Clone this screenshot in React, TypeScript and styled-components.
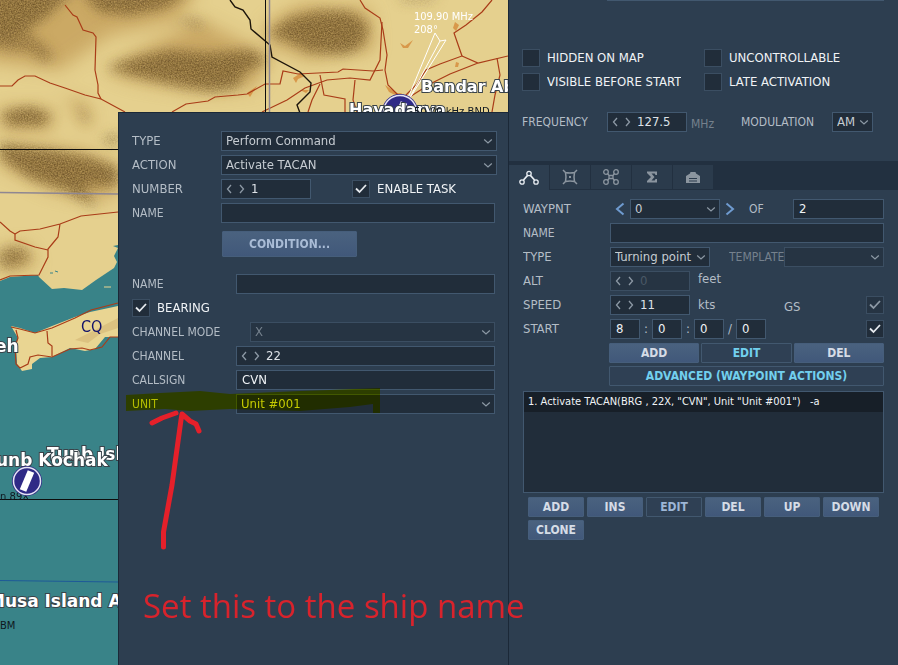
import React, { useId, useState } from 'react';
import styled, { createGlobalStyle, css } from 'styled-components';

const color = {
  panel: '#2d3e50',
  band: '#223040',
  tab: '#2b3b4c',
  field: '#212d3a',
  fieldOff: '#263443',
  line: '#42586f',
  lineOff: '#3b4e62',
  label: '#b4bdc6',
  value: '#c6ccd2',
  bright: '#f0f3f6',
  muted: '#75818d',
  accent: '#72d0ee',
  red: '#d8232c',
};

const GlobalStyle = createGlobalStyle`
  *, *::before, *::after { box-sizing: border-box; }
  body { margin: 0; background: ${color.panel}; }
  body, button, input, select {
    font-family: 'DejaVu Sans Condensed', 'DejaVu Sans', sans-serif;
    font-size: 13px;
    line-height: 16px;
  }
`;

/* ---------- shell ---------- */

const Page = styled.div`
  position: relative;
  display: grid;
  grid-template-columns: minmax(0, 1fr) 390px;
  min-height: 100vh;
  overflow: hidden;
  color: ${color.label};
`;

const Workspace = styled.main`
  position: relative;
  display: flex;
  padding: 112px 0 0 118px;
`;

const MapCanvas = styled.svg`
  position: absolute;
  inset: 0;
  width: 100%;
  height: 100%;
`;

const Dialog = styled.section`
  position: relative;
  flex: 1;
  min-width: 0;
  display: flex;
  flex-direction: column;
  gap: 4px;
  padding: 18px 13px 18px 13px;
  border: solid #1b2837;
  border-width: 1px 0 0 1px;
  background: ${color.panel};
`;

const Sidebar = styled.aside`
  min-width: 0;
  border-left: 1px solid #1b2837;
  background: ${color.panel};
`;

/* ---------- form parts ---------- */

const Row = styled.div<{ $label?: number; $wide?: boolean }>`
  display: grid;
  grid-template-columns: ${p => p.$label ?? 89}px minmax(0, 1fr);
  align-items: center;
  height: 20px;
  margin-right: ${p => (p.$wide ? -2 : 0)}px;
`;

const Label = styled.label<{ $muted?: boolean; $bright?: boolean; $small?: boolean }>`
  white-space: nowrap;
  overflow: hidden;
  font-size: ${p => (p.$small ? 12 : 13)}px;
  color: ${p => (p.$muted ? color.muted : p.$bright ? color.bright : color.label)};
`;

const Inline = styled.div<{ $gap?: number }>`
  display: flex;
  align-items: center;
  min-width: 0;
  min-height: 20px;
  gap: ${p => p.$gap ?? 0}px;
`;

const Push = styled.div`
  flex: 1;
`;

const box = css<{ $off?: boolean }>`
  height: 20px;
  border: 1px solid ${p => (p.$off ? color.lineOff : color.line)};
  border-radius: 0;
  background: ${p => (p.$off ? color.fieldOff : color.field)};
  color: ${p => (p.$off ? color.muted : color.value)};
  outline: none;
  opacity: 1;
`;

const TextInput = styled.input<{ $off?: boolean; $w?: number }>`
  ${box}
  width: ${p => (p.$w ? `${p.$w}px` : '100%')};
  padding: 0 5px 2px;
  color: ${color.bright};
`;

const SelectBox = styled.div<{ $w?: number }>`
  display: grid;
  align-items: center;
  width: ${p => (p.$w ? `${p.$w}px` : '100%')};
  > * { grid-area: 1 / 1; }
  > svg { justify-self: end; margin-right: 4px; pointer-events: none; }
`;

const SelectControl = styled.select<{ $off?: boolean }>`
  ${box}
  appearance: none;
  width: 100%;
  padding: 0 16px 0 4px;
`;

const SpinBox = styled.div<{ $off?: boolean; $w?: number }>`
  ${box}
  display: flex;
  align-items: center;
  width: ${p => (p.$w ? `${p.$w}px` : '100%')};
  padding-left: 4px;
`;

const SpinButton = styled.button`
  display: flex;
  width: 12px;
  padding: 0;
  border: 0;
  background: none;
  color: #8d99a5;
`;

const SpinInput = styled.input<{ $off?: boolean }>`
  flex: 1;
  min-width: 0;
  height: 18px;
  padding: 0 0 2px 1px;
  border: 0;
  outline: none;
  background: none;
  color: ${p => (p.$off ? '#4a5866' : '#dde2e7')};
`;

const CheckBox = styled.span`
  display: inline-grid;
  place-items: center;
  > * { grid-area: 1 / 1; }
  > svg { visibility: hidden; pointer-events: none; }
  > input:checked + svg { visibility: visible; }
`;

const CheckInput = styled.input<{ $off?: boolean }>`
  ${box}
  appearance: none;
  width: 18px;
  height: 18px;
  margin: 0;
  border-color: ${color.lineOff};
`;

const Button = styled.button<{ $active?: boolean; $tone?: string }>`
  height: 20px;
  padding: 0;
  border: 1px solid ${p => (p.$active ? color.line : '#465e7b')};
  border-radius: 1px;
  background: ${p => (p.$active ? '#2f4054' : 'linear-gradient(#4a627f, #41587a)')};
  color: ${p => p.$tone ?? '#d5dce6'};
  font-size: 12px;
  font-weight: bold;
  white-space: nowrap;
`;

const ConditionButton = styled(Button)`
  width: 135px;
  height: 26px;
  margin: 4px 0 13px 90px;
`;

const StepButton = styled.button`
  display: flex;
  justify-content: center;
  width: 20px;
  padding: 0;
  border: 0;
  background: none;
  color: #6f9bd0;
`;

const Chevron = ({ dir, size = 'small' }: { dir: 'left' | 'right' | 'down'; size?: 'small' | 'large' }) => {
  const big = size === 'large';
  if (dir === 'down')
    return (
      <svg width="10" height="8" viewBox="0 0 10 8" fill="none" stroke="#8d99a5" strokeWidth="1.2" aria-hidden>
        <path d="M1.2 2.5 5 6l3.8-3.500" />
      </svg>
    );
  const d = big
    ? dir === 'left' ? 'M8.5 1.500 2 7l6.500 5.500' : 'M1.500 1.500 8 7l-6.500 5.500'
    : dir === 'left' ? 'M5 1 1.5 5 5 9' : 'M2 1l3.5 4L2 9';
  return (
    <svg width={big ? 10 : 7} height={big ? 14 : 10} viewBox={big ? '0 0 10 14' : '0 0 7 10'}
      fill="none" stroke="currentColor" strokeWidth={big ? 2 : 1.3} aria-hidden>
      <path d={d} />
    </svg>
  );
};

type SelectProps = { id?: string; name?: string; value: string; width?: number; off?: boolean };
const Select = ({ id, name, value, width, off }: SelectProps) => (
  <SelectBox $w={width}>
    <SelectControl id={id} aria-label={name} defaultValue={value} $off={off} disabled={off}>
      <option>{value}</option>
    </SelectControl>
    <Chevron dir="down" />
  </SelectBox>
);

type SpinProps = { id?: string; value: string; width?: number; off?: boolean };
const Spinner = ({ id, value, width, off }: SpinProps) => {
  const [current, setCurrent] = useState(value);
  const step = (by: number) => setCurrent(String(Number(current) + by));
  return (
    <SpinBox $w={width} $off={off}>
      <SpinButton type="button" aria-label="Decrease" disabled={off} onClick={() => step(-1)}>
        <Chevron dir="left" />
      </SpinButton>
      <SpinButton type="button" aria-label="Increase" disabled={off} onClick={() => step(1)}>
        <Chevron dir="right" />
      </SpinButton>
      <SpinInput id={id} value={current} disabled={off} $off={off} onChange={e => setCurrent(e.target.value)} />
    </SpinBox>
  );
};

type CheckProps = { id?: string; name?: string; checked?: boolean; off?: boolean };
const Check = ({ id, name, checked, off }: CheckProps) => (
  <CheckBox>
    <CheckInput type="checkbox" id={id} aria-label={name} defaultChecked={checked} disabled={off} $off={off} />
    <svg width="12" height="10" viewBox="0 0 12 10" fill="none" stroke={off ? '#8d99a5' : '#e6eaee'} strokeWidth="1.800" aria-hidden>
      <path d="M1 4.500 4.500 8l6.500-7" />
    </svg>
  </CheckBox>
);

const LabeledCheck = ({ text, checked }: { text: string; checked?: boolean }) => {
  const id = useId();
  return (
    <Inline $gap={7}>
      <Check id={id} checked={checked} />
      <Label htmlFor={id} $bright>{text}</Label>
    </Inline>
  );
};

/* ---------- map ---------- */

const MapName = styled.text<{ $small?: boolean }>`
  font: bold ${p => (p.$small ? 16 : 17)}px 'DejaVu Sans', sans-serif;
  fill: #fff;
  stroke: #39434a;
  stroke-width: 2px;
  paint-order: stroke;
`;

const MapNote = styled.text`
  font: 10px 'DejaVu Sans', sans-serif;
  fill: #101820;
`;

const BeaconNote = styled.text`
  font: 11px 'DejaVu Sans Condensed', 'DejaVu Sans', sans-serif;
  fill: #fff;
`;

const Beacon = ({ x, y, r }: { x: number; y: number; r: number }) => (
  <g transform={`translate(${x} ${y})`}>
    <circle r={r} fill="#2f2a86" />
    <circle r={r - 1.5} fill="none" stroke="#e6e4f4" strokeWidth="1.500" />
    <path d="M-4 9.500 4-9.500" stroke="#fff" strokeWidth="7" />
  </g>
);

const roads = [
  'M65 5l8 10 4 2 6 13 10 3 3 4-1 33 3 15v8l3 6',
  'M0 86h12l6-6 7-4h10l15 7 15 5 20 7 16 4 24 13',
  'M172 112l14-8 22-3 7-4 23-2 9-1 18-10h15l3-13 15 3 40-2 5-3 30 2 10-1',
  'M360 0l5 8 15 10 3 12 4 25-2 15 3 15 10 10',
  'M382 22l-2 38-10 20-20-2-23 2-22 8-18 12-25 12',
  'M492 0l-10 12-16 13-12 8 8 23-22 8-14 6-10 15-12 12',
  'M462 56l16 7 30-7M478 63l-28 11-20 10-22 14',
  'M497 58l3 17-5 20-3 17',
  'M320 75l4 20 21 4v13M308 112l4-12 8-16M355 80l-2 20 4 12',
  'M0 222l10 9 5 3M15 234l5-3 20-2 20-5 21-8 37-4M60 224l-2 13-5 6-5 6v8l-5 10-4 8-29 1-10 4',
  'M15 234v6l20 7 13 3',
  'M11 327l9 2 15 4 17-5 23-10 16-8 27-7M47 331l1 12 4 3v10M16 330l2 8-3 8 1 18 4 4 8-4 2-7 8-2 14 2 18-8 12-1 8 2 12-3 8-10h17',
];

const MapView = () => (
  <MapCanvas viewBox="0 0 509 665" preserveAspectRatio="xMinYMin slice" role="img" aria-label="Mission map">
    <defs>
      <filter id="soft" x="-20%" y="-30%" width="140%" height="160%">
        <feGaussianBlur stdDeviation="9" />
      </filter>
      <filter id="relief" x="-20%" y="-30%" width="140%" height="160%">
        <feGaussianBlur stdDeviation="6" result="b" />
        <feTurbulence type="fractalNoise" baseFrequency="0.7" numOctaves="2" seed="4" />
        <feColorMatrix values="0 0 0 0 0  0 0 0 0 0  0 0 0 0 0  0 1.1 0 0 0.1" />
        <feComposite in="b" operator="in" />
      </filter>
      <clipPath id="land">
        <path d="M0 0H509V112H118V245l-5 1 5 2-4 8 3 6-3 6-18 12-14 10-18-2-12 1-13-12L38 275 10 277 0 281Z" />
      </clipPath>
    </defs>
    <rect width="509" height="665" fill="#398388" />
    <g clipPath="url(#land)">
      <rect width="509" height="300" fill="#e5d08e" />
      <g fill="#bd9450" opacity="0.650" filter="url(#soft)">
        <path d="M-20-20H200L180 20 110 35 60 70-20 60Z" />
        <path d="M105 70 150 45 200 20 270 55 255 88 200 92 130 80Z" />
        <path d="M265 25 300 5 370 8 375 50 310 60 270 45Z" />
        <path d="M0 108h50l5 22H0ZM0 145l80 5 38 15v30L95 200 50 190 0 165Z" />
        <path d="M0 250l25-5 12 20-37 8ZM60 95l25 8 8 22-10 2-10-20Z" />
      </g>
      <g fill="#71562b" filter="url(#relief)">
        <path d="M-10-10H75L45 18 20 35-10 48Z" />
        <path d="M80-8H190L165 8 130 15 100 12Z" />
        <path d="M0 38 28 32 45 45 55 58 42 62 30 52 0 50Z" opacity="0.700" />
        <path d="M106 68 135 58 170 50 210 53 250 50 268 60 245 72 236 88 212 91 180 86 145 78Z" />
        <path d="M268 34 290 18 320 11 350 12 369 26 362 46 345 54 310 52 290 42Z" />
        <path d="M175 20l20-2 12 8-10 2ZM395-4h45l-10 6h-25Z" opacity="0.600" />
        <path d="M2 113l28-6 22 9-10 9H8Z" />
        <path d="M0 144l50 6 40 8 28 10v18H95l-12-2 14 24-32-18-35-12L0 157Z" />
        <path d="M0 250l20-3 12 10-12 8-20 3ZM78 100l12 22-7-2ZM100 140l18-8v14Z" opacity="0.800" />
      </g>
      <g fill="#d48a3a" opacity="0.800">
        <path d="M293 78l8-5 4 3-7 3-2 4ZM300 90h9l-3 3ZM400 43l5 3 8-6-5 8h-5ZM385 85l12 8h5l-3 4-10-5ZM455 22l4 3-3 6-3-3ZM456 62l3 1-1 4h-3ZM247 93l10-7-7 11Z" />
      </g>
    </g>
    <path d="M11 326l9 2 15 5 17-7 23-9 15-5 28-6v31h-13l-10 12-10 2-15-3-18 9-12 1-8 6v5l-10 2-5-7-1-19 2-7Z" fill="#e9d592" />
    <path d="M75 340l20-10 23-12v10l-18 6-12 9Z" fill="#c9a566" opacity="0.400" />
    <path d="M104 287h7" stroke="#e9d592" />
    <path d="M50 273h3M55 271l3 1" stroke="#398388" />
    <g fill="none" stroke="#a93c18" strokeWidth="1.200">
      {roads.map(d => <path key={d} d={d} />)}
    </g>
    <path d="M230 0l5 7 8 3 7 10 1 9 19 16 2 12 28 15 11 11-1 9-13 13 3 8" fill="none" stroke="#1c140a" strokeWidth="1.400" />
    <path d="M265.500 0V112M0 149.500H118M0 499.500H118" stroke="#0d0d0d" />
    <path d="M269.500 0V112M0 192.500 118 194" stroke="#8f8792" strokeWidth="1.500" />
    <path d="M0 580.500 118 582" stroke="#1e5a98" />
    <g fill="none" stroke="#fff">
      <path d="M408 98 435 33l5 8 6-1-36 58M410 97l30-56" />
    </g>
    <BeaconNote x="414" y="20">109.90 MHz</BeaconNote>
    <BeaconNote x="414" y="33">208°</BeaconNote>
    <Beacon x={400} y={112} r={18} />
    <MapName x="349" y="115" $small>Havadarya</MapName>
    <MapNote x="414" y="115">50.00 kHz BND</MapNote>
    <MapName x="421" y="92" $small>Bandar Abbas</MapName>
    <MapName x="-5" y="352">eh</MapName>
    <text x="81" y="332" fill="#12126a" fontSize="16">CQ</text>
    <MapName x="47" y="460">Tunb Island</MapName>
    <MapName x="-4" y="466">unb Kochak</MapName>
    <MapNote x="-4" y="488">t</MapNote>
    <MapNote x="0" y="500">n 89X</MapNote>
    <Beacon x={27} y={481} r={15} />
    <MapName x="-12" y="607">Musa Island Airport</MapName>
    <MapNote x="0" y="629">BM</MapNote>
  </MapCanvas>
);

/* ---------- command dialog ---------- */

const CommandDialog = () => (
  <Dialog aria-label="Waypoint action">
    <Row $wide>
      <Label htmlFor="cmd-type">TYPE</Label>
      <Select id="cmd-type" value="Perform Command" />
    </Row>
    <Row $wide>
      <Label htmlFor="cmd-action">ACTION</Label>
      <Select id="cmd-action" value="Activate TACAN" />
    </Row>
    <Row>
      <Label htmlFor="cmd-number">NUMBER</Label>
      <Inline $gap={41}>
        <Spinner id="cmd-number" value="1" width={90} />
        <LabeledCheck text="ENABLE TASK" checked />
      </Inline>
    </Row>
    <Row>
      <Label htmlFor="cmd-name" $small>NAME</Label>
      <TextInput id="cmd-name" />
    </Row>
    <ConditionButton type="button" $tone="#a9bcd6">CONDITION...</ConditionButton>
    <Row $label={104}>
      <Label htmlFor="tacan-name" $small>NAME</Label>
      <TextInput id="tacan-name" />
    </Row>
    <LabeledCheck text="BEARING" checked />
    <Row $label={118}>
      <Label htmlFor="tacan-mode" $small>CHANNEL MODE</Label>
      <Select id="tacan-mode" value="X" off />
    </Row>
    <Row $label={104}>
      <Label htmlFor="tacan-channel" $small>CHANNEL</Label>
      <Spinner id="tacan-channel" value="22" />
    </Row>
    <Row $label={104}>
      <Label htmlFor="tacan-callsign" $small>CALLSIGN</Label>
      <TextInput id="tacan-callsign" defaultValue="CVN" />
    </Row>
    <Row $label={104}>
      <Label htmlFor="tacan-unit" $small>UNIT</Label>
      <Select id="tacan-unit" value="Unit #001" />
    </Row>
  </Dialog>
);

/* ---------- sidebar ---------- */

const GroupSection = styled.section`
  padding: 0 14px 29px 13px;
`;

const SectionRule = styled.div`
  height: 1px;
  margin-left: 85px;
  background: ${color.line};
`;

const Flags = styled.div`
  display: grid;
  grid-template-columns: 182px minmax(0, 1fr);
  row-gap: 4px;
  padding: 47px 0 20px;
`;

const Units = styled.span<{ $muted?: boolean; $shift?: 'up' | 'down' }>`
  color: ${p => (p.$muted ? color.muted : color.label)};
  font-size: ${p => (p.$muted ? 12 : 13)}px;
  padding-top: ${p => (p.$shift === 'down' ? 4 : 0)}px;
  padding-bottom: ${p => (p.$shift === 'up' ? 4 : 0)}px;
`;

const TabBar = styled.div`
  display: flex;
  gap: 1px;
  height: 29px;
  padding-top: 4px;
  background: ${color.band};
`;

const Tab = styled.button<{ $active?: boolean }>`
  display: grid;
  place-items: center;
  width: 40px;
  height: ${p => (p.$active ? 25 : 24)}px;
  padding: 0;
  border: 0;
  background: ${p => (p.$active ? color.panel : color.tab)};
  color: ${p => (p.$active ? '#e8edf2' : '#8b959f')};
`;

const Waypoint = styled.section`
  display: flex;
  flex-direction: column;
  gap: 4px;
  padding: 9px 14px 0;
`;

const FieldSplit = styled.div<{ $cols: string }>`
  display: grid;
  grid-template-columns: ${p => p.$cols};
  align-items: center;
`;

const Separator = styled.span`
  width: 12px;
  text-align: center;
`;

const WaypointButtons = styled.div`
  display: grid;
  grid-template-columns: repeat(3, 1fr);
  gap: 3px 2px;
  margin-left: 86px;
`;

const WideButton = styled(Button)`
  grid-column: 1 / -1;
`;

const ActionList = styled.ul`
  height: 102px;
  margin: 1px 0 0;
  padding: 0;
  border: 1px solid ${color.line};
  background: ${color.field};
  list-style: none;
`;

const ActionItem = styled.li`
  height: 20px;
  padding: 0 4px;
  background: #171f28;
  color: ${color.bright};
  font-size: 11px;
  line-height: 20px;
  white-space: pre;
`;

const ActionButtons = styled.div`
  display: grid;
  grid-template-columns: repeat(6, 1fr);
  gap: 3px;
  padding: 0 5px;
`;

const tabs = [
  {
    name: 'Route',
    icon: (
      <g fill="none" stroke="currentColor" strokeWidth="1.300">
        <circle cx="3" cy="13" r="2.200" /><circle cx="10" cy="4.500" r="2.200" /><circle cx="17" cy="13" r="2.200" />
        <path d="M4.500 11 8.500 6.500M11.500 6.500l4 4.500" strokeWidth="1.800" />
      </g>
    ),
  },
  {
    name: 'Triggered actions',
    icon: (
      <g fill="none" stroke="currentColor" strokeWidth="1.500">
        <path d="M5.500 4.500q4.500 1 9 0-1 4.500 0 9-4.500-1-9 0 1-4.500 0-9ZM3 2l3 3M17 2l-3 3M3 16l3-3M17 16l-3-3" />
        <path d="M9 9h2" strokeWidth="2" />
      </g>
    ),
  },
  {
    name: 'Payload',
    icon: (
      <g fill="none" stroke="currentColor" strokeWidth="1.300">
        <circle cx="5" cy="4" r="2.300" /><circle cx="15" cy="4" r="2.300" />
        <circle cx="5" cy="14" r="2.300" /><circle cx="15" cy="14" r="2.300" />
        <path d="M6.500 5.500 8 7.500v3l-1.500 2M13.500 5.500 12 7.500v3l1.500 2M8 7.500h4M8 10.500h4" />
      </g>
    ),
  },
  {
    name: 'Summary',
    icon: <path d="M5 3.500h10v3.500h-1.500l-.8-1.500H9.500L12.500 9l-3 3.500h3.200l.8-1.500H15v3.500H5V13l4-4-4-4Z" fill="currentColor" />,
  },
  {
    name: 'Warehouse',
    icon: (
      <>
        <path d="M3 8l4-2.500.5-1.500h5l.5 1.500L17 8v7H3Z" fill="currentColor" />
        <path d="M6 10.500h8M6 13h8" stroke="#2b3b4c" strokeWidth="1.100" />
      </>
    ),
  },
];

const actionButtons = ['ADD', 'INS', 'EDIT', 'DEL', 'UP', 'DOWN', 'CLONE'];

const GroupPanel = () => (
  <Sidebar>
    <GroupSection>
      <SectionRule />
      <Flags>
        <LabeledCheck text="HIDDEN ON MAP" />
        <LabeledCheck text="UNCONTROLLABLE" />
        <LabeledCheck text="VISIBLE BEFORE START" />
        <LabeledCheck text="LATE ACTIVATION" />
      </Flags>
      <Row $label={85}>
        <Label htmlFor="frequency" $small>FREQUENCY</Label>
        <FieldSplit $cols="80px 54px minmax(0, 1fr) 41px 11px">
          <Spinner id="frequency" value="127.5" />
          <Inline $gap={4}><span /><Units $muted $shift="down">MHz</Units></Inline>
          <Label htmlFor="modulation" $small>MODULATION</Label>
          <Select id="modulation" value="AM" />
        </FieldSplit>
      </Row>
    </GroupSection>
    <TabBar role="tablist">
      {tabs.map((t, i) => (
        <Tab key={t.name} type="button" role="tab" aria-label={t.name} aria-selected={i === 0} $active={i === 0}>
          <svg width="20" height="18" viewBox="0 0 20 18" aria-hidden>{t.icon}</svg>
        </Tab>
      ))}
    </TabBar>
    <Waypoint>
      <Row $label={87}>
        <Label htmlFor="wp-index">WAYPNT</Label>
        <FieldSplit $cols="20px 90px 20px minmax(0, 1fr) 91px">
          <StepButton type="button" aria-label="Previous waypoint"><Chevron dir="left" size="large" /></StepButton>
          <Select id="wp-index" value="0" />
          <StepButton type="button" aria-label="Next waypoint"><Chevron dir="right" size="large" /></StepButton>
          <Inline $gap={9}><span /><Label htmlFor="wp-count" $small>OF</Label></Inline>
          <TextInput id="wp-count" defaultValue="2" />
        </FieldSplit>
      </Row>
      <Row $label={87}>
        <Label htmlFor="wp-name" $small>NAME</Label>
        <TextInput id="wp-name" />
      </Row>
      <Row $label={87}>
        <Label htmlFor="wp-type">TYPE</Label>
        <FieldSplit $cols="119px 55px minmax(0, 1fr)">
          <Select id="wp-type" value="Turning point" width={100} />
          <Label htmlFor="wp-template" $muted $small>TEMPLATE</Label>
          <Select id="wp-template" value="" off />
        </FieldSplit>
      </Row>
      <Row $label={87}>
        <Label htmlFor="wp-alt">ALT</Label>
        <Inline $gap={8}>
          <Spinner id="wp-alt" value="0" width={80} off />
          <Units $shift="up">feet</Units>
        </Inline>
      </Row>
      <Row $label={87}>
        <Label htmlFor="wp-speed">SPEED</Label>
        <FieldSplit $cols="80px 94px minmax(0, 1fr) 18px">
          <Spinner id="wp-speed" value="11" />
          <Inline $gap={8}><span /><Units>kts</Units></Inline>
          <Units $shift="down">GS</Units>
          <Check name="Lock ground speed" checked off />
        </FieldSplit>
      </Row>
      <Row $label={87}>
        <Label htmlFor="wp-hours">START</Label>
        <Inline>
          <TextInput id="wp-hours" defaultValue="8" $w={30} />
          <Separator>:</Separator>
          <TextInput aria-label="Minutes" defaultValue="0" $w={30} />
          <Separator>:</Separator>
          <TextInput aria-label="Seconds" defaultValue="0" $w={30} />
          <Separator>/</Separator>
          <TextInput aria-label="Day" defaultValue="0" $w={30} />
          <Push />
          <Check name="Lock start time" checked />
        </Inline>
      </Row>
      <WaypointButtons>
        <Button type="button">ADD</Button>
        <Button type="button" $active $tone={color.accent}>EDIT</Button>
        <Button type="button">DEL</Button>
        <WideButton type="button" $active $tone={color.accent}>ADVANCED (WAYPOINT ACTIONS)</WideButton>
      </WaypointButtons>
      <ActionList>
        <ActionItem>{'1. Activate TACAN(BRG , 22X, "CVN", Unit "Unit #001")   -a'}</ActionItem>
      </ActionList>
      <ActionButtons>
        {actionButtons.map(name => (
          <Button key={name} type="button" $active={name === 'EDIT'} $tone={name === 'EDIT' ? '#9db6d6' : undefined}>
            {name}
          </Button>
        ))}
      </ActionButtons>
    </Waypoint>
  </Sidebar>
);

/* ---------- hand-drawn notes over the page ---------- */

const Marker = styled.svg`
  position: absolute;
  top: 385px;
  left: 124px;
  mix-blend-mode: multiply;
  pointer-events: none;
`;

const Arrow = styled.svg`
  position: absolute;
  top: 408px;
  left: 145px;
  pointer-events: none;
`;

const NoteText = styled.p`
  position: absolute;
  top: 582px;
  left: 143px;
  margin: 0;
  color: ${color.red};
  font: 33px/48px 'Open Sans', 'Noto Sans', sans-serif;
  white-space: nowrap;
  pointer-events: none;
`;

export default function App() {
  return (
    <>
      <GlobalStyle />
      <Page>
        <Workspace>
          <MapView />
          <CommandDialog />
        </Workspace>
        <GroupPanel />
        <Marker width="260" height="32" viewBox="124 385 260 32" aria-hidden>
          <path d="M126 395l34-2 40-2 30 3 70-3 30-1 50-2v25h-7v-9l-23 3-50 4-70-2-40 2-25-2-39 2Z" fill="#ff0" />
        </Marker>
        <Arrow width="60" height="145" viewBox="145 408 60 145" fill="none" stroke="#e5202a" strokeWidth="5" strokeLinecap="round" strokeLinejoin="round" aria-hidden>
          <path d="M163.500 547v-15l8.500-47 9-65 1-6 8 7 6 3 3 7M152 423l10-5 14-5" />
        </Arrow>
        <NoteText>Set this to the ship name</NoteText>
      </Page>
    </>
  );
}
